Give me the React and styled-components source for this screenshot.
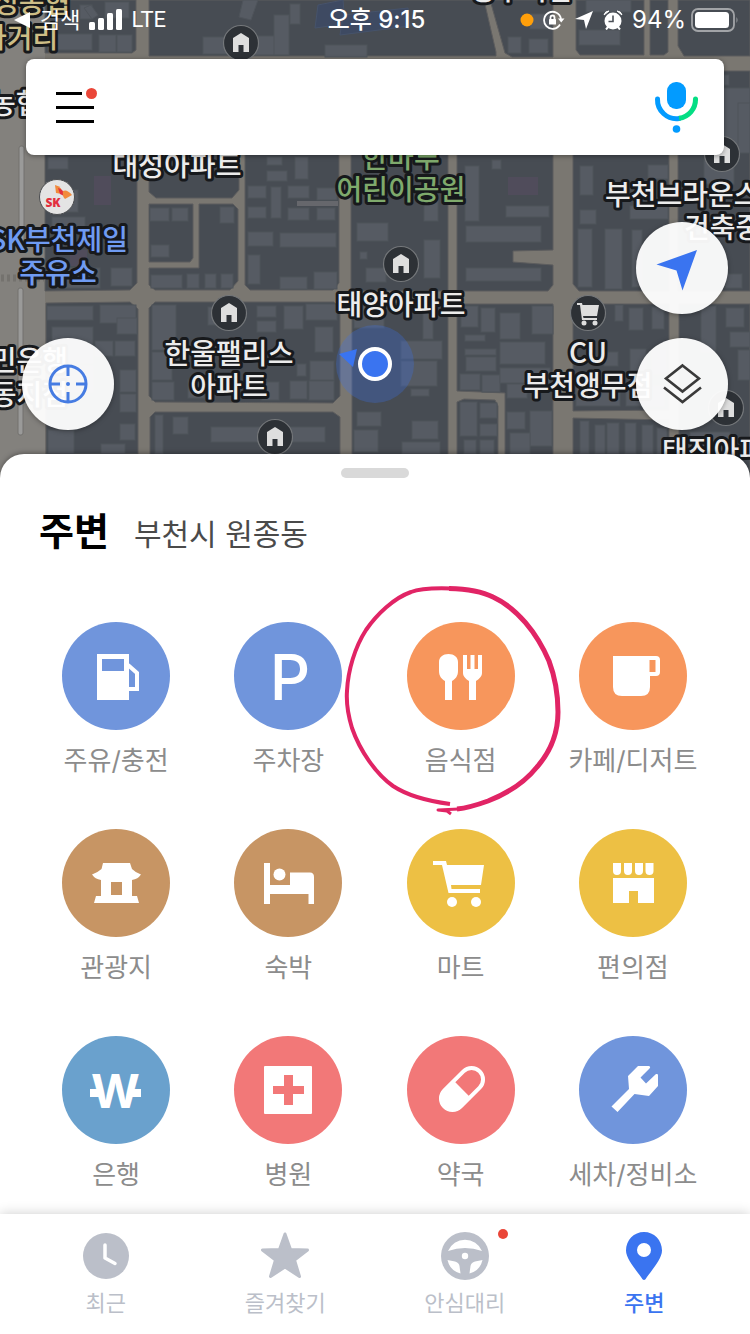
import React from "react";
import styled, { createGlobalStyle } from "styled-components";

const GlobalStyle = createGlobalStyle`
  *, *::before, *::after { box-sizing: border-box; }
  body {
    margin: 0;
    background: #fff;
    font-family: Inter, "Noto Sans CJK KR", sans-serif;
  }
  button { border: 0; padding: 0; background: none; font: inherit; cursor: pointer; }
  a { color: inherit; text-decoration: none; }
  svg { display: block; flex: none; }
`;

const Screen = styled.div`
  display: flex;
  flex-direction: column;
  min-height: 100vh;
  overflow-x: hidden;
`;

/* ---------- map ---------- */

const MapArea = styled.section`
  position: relative;
  padding-bottom: 48px;
  overflow: hidden;
  background: #7a7771;
`;

const MapCanvas = styled.svg`
  position: absolute;
  inset: 0;
  width: 100%;
  height: 100%;
`;

const MapText = styled.text`
  font-family: "Noto Sans CJK KR", sans-serif;
  font-size: 28px;
  font-weight: 500;
  fill: ${(p) => p.$color || "#ececec"};
  stroke: #17191c;
  stroke-width: 6px;
  stroke-linejoin: round;
  paint-order: stroke;
  text-anchor: ${(p) => p.$anchor || "middle"};
`;

const blocks = [
  "45,0 136,0 136,50 132,53 45,53",
  "149,0 484,0 496,52 496,56 149,56",
  "490,0 553,0 553,57 512,57 505,53",
  "576,0 644,0 644,55 580,55 576,50",
  "650,0 668,0 668,52 664,55 650,55",
  "678,0 750,0 750,56 684,56 678,46",
  "678,71 750,71 750,291 678,291",
  "45,70 137,70 137,283 130,290 45,291",
  "149,70 239,70 239,190 232,198 156,198 149,192",
  "149,204 193,204 193,258 190,262 149,262",
  "199,204 233,204 238,209 238,281 230,290 155,290 149,285 149,268 199,268",
  "245,70 339,70 339,283 333,290 250,290 245,285",
  "351,70 448,70 448,291 351,291",
  "457,70 553,70 553,250 513,251 513,262 553,265 553,285 548,291 457,291",
  "573,70 669,70 669,291 579,291 573,284",
  "46,303 130,302 138,309 138,454 46,454",
  "155,302 334,302 340,309 340,396 333,403 155,402 149,396 149,308",
  "155,412 333,412 340,417 340,480 150,480 150,417",
  "352,303 448,303 448,480 352,480",
  "457,304 553,304 553,480 505,480 505,393 457,391",
  "457,402 464,399 495,400 498,406 498,480 457,480",
  "573,304 669,304 669,410 573,411",
  "573,418 669,420 669,480 573,480",
  "679,304 750,304 750,480 679,480",
];

// x, y, width, height
const buildings = [
  [48, 34, 44, 16], [99, 35, 17, 17], [117, 35, 15, 17], [80, 5, 12, 14], [105, 2, 24, 16],
  [203, 37, 40, 17], [243, 36, 43, 19], [274, 15, 15, 40], [325, 45, 42, 12], [290, 4, 10, 20],
  [508, 37, 13, 16], [529, 39, 19, 14], [530, 14, 20, 15], [579, 30, 41, 15], [586, 0, 45, 12],
  [724, 75, 5, 10], [700, 88, 50, 60], [738, 103, 12, 50],
  [48, 157, 20, 12], [60, 190, 18, 22], [52, 217, 33, 15], [111, 268, 21, 18], [60, 268, 40, 20],
  [150, 208, 19, 13], [172, 208, 16, 13], [220, 207, 14, 16], [151, 245, 18, 12], [151, 275, 31, 13],
  [187, 274, 12, 14], [205, 274, 11, 14], [221, 274, 12, 14], [267, 157, 15, 8], [267, 171, 20, 10],
  [295, 157, 13, 22], [248, 186, 18, 12], [271, 187, 10, 31], [288, 186, 21, 12], [317, 188, 20, 12],
  [248, 207, 18, 11], [288, 208, 21, 12], [317, 208, 18, 12], [248, 232, 25, 14], [280, 233, 56, 14],
  [248, 255, 12, 29], [280, 277, 27, 12], [314, 272, 23, 17], [357, 223, 31, 18], [360, 252, 7, 7],
  [424, 240, 16, 38], [366, 268, 20, 14], [465, 166, 14, 55], [492, 160, 9, 9], [424, 197, 14, 24],
  [506, 206, 43, 11], [466, 226, 75, 16], [466, 268, 75, 13], [580, 166, 13, 29], [580, 210, 16, 14],
  [578, 229, 14, 58], [605, 229, 17, 60], [632, 230, 10, 57], [648, 165, 20, 14], [630, 206, 38, 13],
  [725, 274, 17, 14], [704, 160, 30, 24], [47, 306, 46, 14], [100, 305, 36, 18], [117, 318, 20, 16],
  [52, 327, 41, 36], [95, 341, 18, 15], [115, 341, 20, 15], [47, 366, 46, 26], [120, 370, 16, 22],
  [120, 394, 16, 18], [120, 424, 15, 16], [48, 430, 26, 24], [101, 444, 24, 10], [152, 305, 24, 45],
  [152, 352, 20, 28], [152, 382, 22, 18], [208, 307, 14, 18], [257, 306, 19, 11], [257, 321, 19, 11],
  [284, 306, 19, 23], [306, 304, 31, 16], [315, 327, 18, 25], [297, 364, 9, 12], [310, 361, 24, 19],
  [290, 381, 17, 18], [309, 381, 25, 19], [262, 382, 17, 18], [188, 380, 16, 18], [155, 415, 8, 39],
  [173, 417, 15, 17], [211, 427, 114, 15], [220, 342, 17, 18], [354, 306, 30, 22], [423, 307, 10, 32],
  [401, 341, 41, 18], [401, 361, 36, 25], [411, 389, 18, 7], [412, 421, 26, 18], [402, 442, 38, 12],
  [354, 430, 24, 22], [357, 412, 24, 14], [461, 306, 17, 21], [481, 308, 14, 24], [500, 313, 20, 26],
  [532, 306, 21, 28], [465, 335, 20, 6], [465, 349, 31, 6], [466, 357, 30, 14], [500, 342, 45, 22],
  [460, 374, 20, 16], [482, 375, 18, 17], [500, 368, 50, 15], [507, 384, 20, 14], [460, 402, 17, 34],
  [480, 403, 17, 15], [480, 424, 17, 12], [464, 440, 12, 14], [480, 440, 14, 14], [507, 412, 18, 17],
  [530, 411, 22, 35], [510, 433, 20, 21], [629, 308, 14, 22], [652, 307, 12, 22], [615, 305, 8, 16],
  [604, 352, 14, 14], [630, 349, 16, 25], [652, 350, 14, 24], [576, 388, 44, 18], [626, 386, 38, 20],
  [580, 421, 9, 33], [595, 425, 10, 29], [607, 423, 12, 31], [625, 423, 11, 31], [642, 425, 11, 29],
  [657, 428, 10, 26], [701, 306, 15, 46], [726, 308, 18, 19], [730, 332, 20, 15], [690, 432, 40, 20],
  [738, 350, 12, 30],
];

const HomePin = ({ x, y }) => (
  <g transform={`translate(${x} ${y})`}>
    <circle r="17.5" fill="#2d3136" stroke="#74777a" strokeWidth="1.2" />
    <path d="M0 -10L8 -5V9H2.5V2H-2.5V9H-8V-5Z" fill="#dedede" />
  </g>
);

const MapDrawing = () => (
  <MapCanvas viewBox="0 0 750 478" preserveAspectRatio="xMidYMin slice" role="img" aria-label="지도">
    <rect width="750" height="478" fill="#7a7771" />
    <rect width="45" height="478" fill="#83817d" />
    <g fill="#474c53" stroke="#5d5d5e" strokeWidth="1">
      {blocks.map((b) => <polygon key={b} points={b} />)}
    </g>
    <g fill="#565b63" stroke="#4f545b" strokeWidth="1">
      {buildings.map(([x, y, w, h]) => (
        <rect key={`${x}-${y}`} x={x} y={y} width={w} height={h} />
      ))}
      <polygon points="243,0 258,0 251,20 239,17" />
      <polygon points="84,8 91,5 98,15 92,19" />
    </g>
    <g fill="#3e4a62" stroke="#46536b">
      <polygon points="318,5 343,0 345,24 315,28" />
      <polygon points="343,15 408,8 410,26 340,35" />
    </g>
    <g fill="#504c5b">
      <rect x="94" y="176" width="17" height="29" />
      <rect x="508" y="177" width="30" height="18" />
      <rect x="70" y="250" width="17" height="16" />
    </g>
    <rect x="297" y="201" width="41" height="5" fill="#66676c" />
    <g fill="#9a9a99" stroke="#73716e">
      <rect x="19" y="146" width="5" height="104" rx="2" />
      <rect x="18" y="288" width="5" height="147" rx="2" />
    </g>
    <path d="M1 278H45" stroke="#74726e" strokeWidth="7" strokeDasharray="3 3" />

    <HomePin x={241} y={43} />
    <HomePin x={722} y={154} />
    <HomePin x={401} y={264} />
    <HomePin x={229} y={313} />
    <HomePin x={275} y={437} />
    <HomePin x={726} y={408} />
    <g transform="translate(588 313)">
      <circle r="17.5" fill="#2d3136" stroke="#74777a" strokeWidth="1.2" />
      <path d="M-11 -10H-6L-5.500 -8H11L9 3H-5L-4.500 5H9V7H-6L-8 -8H-11Z" fill="#dedede" />
      <circle cx="-4" cy="10" r="2.500" fill="#dedede" />
      <circle cx="7" cy="10" r="2.500" fill="#dedede" />
    </g>
    <g transform="translate(57 197)">
      <circle r="17.5" fill="#e4e4e4" stroke="#4b4d50" />
      <path d="M-2 -12Q6 -10 5 -3L-1 -4Z" fill="#f18a3c" />
      <path d="M1 -9Q7 -8 7 -1L3 -3Z" fill="#e2303f" />
      <path d="M6 -6Q10 -8 15 -2L8 2Q5 -1 6 -6Z" fill="#f18a3c" />
      <text x="-4" y="10" textAnchor="middle" fontFamily="Open Sans, sans-serif" fontWeight="800" fontSize="12" fill="#e2303f">SK</text>
    </g>

    <circle cx="375" cy="364" r="39" fill="#3a74f0" opacity="0.28" />
    <path d="M339 354L357 349L353 367Z" fill="#3a74f0" />
    <circle cx="375" cy="364" r="15" fill="#3a74f0" stroke="#fff" strokeWidth="4" />

    <MapText x="-7" y="13" $anchor="start" $color="#cdbd86">성농협</MapText>
    <MapText x="-19" y="48" $anchor="start" $color="#cdbd86">사거리</MapText>
    <MapText x="-10" y="114" $anchor="start">농협</MapText>
    <MapText x="521" y="0">성우서점</MapText>
    <MapText x="177" y="176">대성아파트</MapText>
    <MapText x="401" y="168" $color="#7faa6c">한마루</MapText>
    <MapText x="401" y="200" $color="#7faa6c">어린이공원</MapText>
    <MapText x="605" y="205" $anchor="start">부천브라운스</MapText>
    <MapText x="684" y="238" $anchor="start">건축중</MapText>
    <MapText x="128" y="250" $anchor="end" $color="#6f9bf2">SK부천제일</MapText>
    <MapText x="58" y="283" $color="#6f9bf2">주유소</MapText>
    <MapText x="401" y="315">태양아파트</MapText>
    <MapText x="229" y="364">한울팰리스</MapText>
    <MapText x="229" y="397">아파트</MapText>
    <MapText x="588" y="363">CU</MapText>
    <MapText x="588" y="396">부천앵무점</MapText>
    <MapText x="68" y="371" $anchor="end">국민은행</MapText>
    <MapText x="68" y="405" $anchor="end">동지점</MapText>
    <MapText x="662" y="461" $anchor="start">태진아파트</MapText>
  </MapCanvas>
);

/* ---------- status bar ---------- */

const StatusBar = styled.header`
  position: relative;
  display: grid;
  grid-template-columns: 1fr auto 1fr;
  align-items: center;
  height: 40px;
  padding: 0 11px 0 14px;
  color: #fff;
`;

const StatusGroup = styled.div`
  display: flex;
  align-items: center;
  justify-content: ${(p) => (p.$end ? "flex-end" : "flex-start")};
  gap: 9px;
`;

const StatusText = styled.span`
  font-size: ${(p) => (p.$small ? 22 : 24)}px;
  line-height: 32px;
  font-weight: ${(p) => (p.$strong ? 500 : 400)};
  font-family: ${(p) => (p.$narrow ? "Roboto, sans-serif" : "inherit")};
  white-space: nowrap;
`;

const BatteryGroup = styled.div`
  display: flex;
  align-items: center;
  gap: 5px;
`;

/* ---------- search ---------- */

const SearchBar = styled.form`
  position: relative;
  display: flex;
  align-items: center;
  gap: 20px;
  height: 96px;
  margin: 19px 26px 0;
  padding: 0 24px 0 30px;
  border-radius: 8px;
  background: #fff;
  box-shadow: 0 1px 5px rgba(0, 0, 0, 0.4);
`;

const SearchInput = styled.input`
  flex: 1;
  min-width: 0;
  height: 64px;
  border: 0;
  outline: 0;
  background: transparent;
  font: inherit;
  font-size: 30px;
`;

/* ---------- floating map controls ---------- */

const Controls = styled.div`
  position: relative;
  display: flex;
  align-items: flex-end;
  justify-content: space-between;
  margin-top: 67px;
  padding: 0 22px;
`;

const ControlColumn = styled.div`
  display: flex;
  flex-direction: column;
  gap: 24px;
`;

const RoundButton = styled.button`
  width: 92px;
  height: 92px;
  border-radius: 50%;
  background: rgba(255, 255, 255, 0.95);
  box-shadow: 0 1px 5px rgba(0, 0, 0, 0.35);
`;

/* ---------- sheet ---------- */

const Sheet = styled.main`
  position: relative;
  flex: 1;
  margin-top: -24px;
  padding: 14px 31px 20px 30px;
  border-radius: 24px 24px 0 0;
  background: #fff;
  box-shadow: 0 -1px 5px rgba(0, 0, 0, 0.35);
`;

const Handle = styled.div`
  width: 68px;
  height: 10px;
  margin: 0 auto;
  border-radius: 5px;
  background: #d9d9d9;
`;

const Heading = styled.div`
  display: flex;
  align-items: baseline;
  gap: 25px;
  margin: 25px 0 60px;
  padding-left: 9px;
  line-height: 56px;
`;

const Title = styled.h1`
  margin: 0;
  font-size: 38px;
  font-weight: 700;
  color: #000;
`;

const Region = styled.span`
  font-size: 30px;
  color: #4a4a4a;
`;

const CategoryGrid = styled.nav`
  display: grid;
  grid-template-columns: repeat(4, 1fr);
  row-gap: 49px;
`;

const Category = styled.a`
  position: relative;
  display: flex;
  flex-direction: column;
  align-items: center;
  gap: 12px;
`;

const Disc = styled.span`
  width: 108px;
  height: 108px;
  border-radius: 50%;
  background: ${(p) => p.$color};
`;

const DiscLetter = styled.text`
  font-family: Inter, sans-serif;
  font-size: ${(p) => p.$size}px;
  font-weight: ${(p) => p.$weight};
  text-anchor: middle;
`;

const CategoryLabel = styled.span`
  font-size: 26px;
  line-height: 38px;
  color: #8c8c8c;
  white-space: nowrap;
`;

const PenCircle = styled.svg`
  position: absolute;
  z-index: 1;
  top: -37px;
  left: 50%;
  margin-left: -118px;
  pointer-events: none;
`;

/* ---------- tab bar ---------- */

const TabBar = styled.nav`
  position: relative;
  display: grid;
  grid-template-columns: repeat(4, 1fr);
  padding: 18px 16px 16px;
  background: #fff;
  box-shadow: 0 0 12px rgba(0, 0, 0, 0.2);
`;

const Tab = styled.a`
  display: flex;
  flex-direction: column;
  align-items: center;
  gap: 8px;
  font-size: 22px;
  line-height: 30px;
  font-weight: ${(p) => (p.$active ? 500 : 400)};
  color: ${(p) => (p.$active ? "#3a74f0" : "#bbbfc9")};
`;

const TabIcon = styled.span`
  position: relative;
`;

const Badge = styled.span`
  position: absolute;
  top: -3px;
  right: -19px;
  width: 10px;
  height: 10px;
  border-radius: 50%;
  background: #ea4638;
`;

const icons = {
  fuel: (
    <>
      <path fillRule="evenodd" d="M35 32H67V78H35ZM40 37V49H62V37Z" />
      <path d="M66 43L75 51V67H66" fill="none" stroke="#fff" strokeWidth="4" />
    </>
  ),
  parking: <DiscLetter x="56" y="78" $size={63} $weight={500}>P</DiscLetter>,
  food: (
    <>
      <path d="M41.500 32C47 32 51 35 51 40V49C51 54 48.500 57 45 59V78H38V59C34.500 57 32 54 32 49V40C32 35 36 32 41.500 32Z" />
      <path d="M56 33H60V47H63.500V33H67.500V47H71V33H75V51C75 54.500 72 57 69 59V78H62V59C59 57 56 54.500 56 51Z" />
    </>
  ),
  cafe: (
    <path fillRule="evenodd" d="M34 34H77Q81 34 81 38V50Q81 54 77 54H71V65Q71 74 62 74H43Q34 74 34 65ZM70.500 38V50H76.500V38Z" />
  ),
  sight: (
    <path fillRule="evenodd" d="M41 34H68L70 40Q74 44 79 45.500Q76 50 70 51V67H75L77 74H32L34 67H39V51Q33 50 30 45.500Q35 44 39.500 40ZM49 53V66H60V53Z" />
  ),
  hotel: (
    <>
      <path d="M30 34H36V56H56V43.500H76Q80 43.500 80 48V75H74.500V65H36V75H30Z" />
      <circle cx="45.500" cy="45.500" r="6" />
    </>
  ),
  mart: (
    <>
      <path d="M26 32H39L40 36H77L74 56H44L44.500 60H73V64H41.500L35 36H26Z" />
      <circle cx="45" cy="73" r="5" />
      <circle cx="69" cy="73" r="5" />
    </>
  ),
  store: (
    <>
      <path d="M34 34H42V42Q42 46 38 46T34 42ZM45 34H53V42Q53 46 49 46T45 42ZM56 34H64V42Q64 46 60 46T56 42ZM66.500 34H74.500V42Q74.500 46 70.500 46T66.500 42Z" />
      <path d="M34 49H75V74H59V62H50V74H34Z" />
    </>
  ),
  bank: (
    <>
      <DiscLetter x="53.500" y="72" $size={47} $weight={700}>W</DiscLetter>
      <path d="M28 53H37V61H28ZM70 53H79V61H70Z" />
    </>
  ),
  hospital: (
    <path fillRule="evenodd" d="M31 30H77Q78 30 78 31V77Q78 78 77 78H31Q30 78 30 77V31Q30 30 31 30ZM50 39V50H39V58H50V69H59V58H70V50H59V39Z" />
  ),
  pharmacy: (
    <g transform="translate(55 53) rotate(-45)">
      <rect x="-25" y="-11.500" width="50" height="23" rx="11.500" fill="none" stroke="#fff" strokeWidth="4" />
      <path d="M0 -13H-13A13 13 0 0 0 -13 13H0Z" />
    </g>
  ),
  repair: (
    <path d="M59 30H70Q72 31 70.500 32.500L61.500 41.500L67 47.500L77 38Q79 37.500 79 39V50L70 60L55.500 58L38.500 76L32.500 70.500L50 53L49 40Z" />
  ),
};

const categories = [
  ["주유/충전", "fuel", "#7095dc"],
  ["주차장", "parking", "#7095dc"],
  ["음식점", "food", "#f7965c", true],
  ["카페/디저트", "cafe", "#f7965c"],
  ["관광지", "sight", "#c79564"],
  ["숙박", "hotel", "#c79564"],
  ["마트", "mart", "#edc044"],
  ["편의점", "store", "#edc044"],
  ["은행", "bank", "#6aa1cd"],
  ["병원", "hospital", "#f27878"],
  ["약국", "pharmacy", "#f27878"],
  ["세차/정비소", "repair", "#7095dc"],
];

const tabs = [
  {
    label: "최근",
    icon: (
      <>
        <circle cx="24" cy="24" r="23" />
        <path d="M23 13V26L33 31.500" fill="none" stroke="#fff" strokeWidth="3.500" strokeLinecap="round" strokeLinejoin="round" />
      </>
    ),
  },
  {
    label: "즐겨찾기",
    icon: (
      <path d="M24 2L29.500 17.500L46.500 18L33.500 28L38.500 44.500L24 35L9.500 44.500L14.500 28L1.500 18L18.500 17.500Z" stroke="currentColor" strokeWidth="3" strokeLinejoin="round" />
    ),
  },
  {
    label: "안심대리",
    badge: true,
    icon: (
      <>
        <circle cx="24" cy="24" r="24" />
        <g fill="#fff">
          <path d="M7 19A18.500 18.500 0 0 1 41 19Q24 13 7 19Z" />
          <path d="M6.500 28L14 29.500Q18 30.500 18.500 34L19.500 41.500A18 18 0 0 1 6.500 28Z" />
          <path d="M41.500 28L34 29.500Q30 30.500 29.500 34L28.500 41.500A18 18 0 0 0 41.500 28Z" />
          <circle cx="24" cy="24" r="3.200" />
        </g>
      </>
    ),
  },
  {
    label: "주변",
    active: true,
    icon: (
      <path fillRule="evenodd" d="M24 0C14 0 6 8 6 18.500C6 27 17 39 22.500 47.200Q24 48.800 25.500 47.200C31 39 42 27 42 18.500C42 8 34 0 24 0ZM24 11A7 7 0 1 1 24 25A7 7 0 1 1 24 11Z" />
    ),
  },
];

export default function App() {
  return (
    <>
      <GlobalStyle />
      <Screen>
        <MapArea>
          <MapDrawing />
          <StatusBar>
            <StatusGroup>
              <svg width="17" height="18" viewBox="0 0 17 18" fill="#fff"><path d="M0 9L16 1V17Z" /></svg>
              <StatusText $small>검색</StatusText>
              <svg width="33" height="22" viewBox="0 0 33 22" fill="#fff">
                <rect x="0" y="13" width="6" height="8" rx="1.500" />
                <rect x="9" y="9" width="6" height="12" rx="1.500" />
                <rect x="18" y="4" width="6" height="17" rx="1.500" />
                <rect x="27" y="0" width="6" height="21" rx="1.500" />
              </svg>
              <StatusText $small $narrow>LTE</StatusText>
            </StatusGroup>
            <StatusText $strong>오후 9:15</StatusText>
            <StatusGroup $end>
              <svg width="14" height="14" viewBox="0 0 14 14"><circle cx="7" cy="7" r="6.500" fill="#ff9f0a" /></svg>
              <svg width="22" height="20" viewBox="0 0 22 20" fill="none" stroke="#fff" strokeWidth="1.800">
                <path d="M17 14.500A8.500 8.500 0 1 1 18 9" />
                <path d="M15 8.500H21.500L18.200 12.500Z" fill="#fff" stroke="none" />
                <rect x="6" y="9" width="7" height="5.500" rx="0.500" fill="#fff" stroke="none" />
                <path d="M7.500 9V7.500Q7.500 5.500 9.500 5.500T11.500 7.500V9" />
              </svg>
              <svg width="20" height="20" viewBox="0 0 20 20" fill="#fff"><path d="M19 1L12 19L10 10L1 9Z" /></svg>
              <svg width="20" height="20" viewBox="0 0 20 20" fill="#fff">
                <circle cx="10" cy="11" r="8.500" />
                <path d="M1 5Q2 1 6 1ZM19 5Q18 1 14 1Z" stroke="#fff" />
                <path d="M3 19.500L6 16M17 19.500L14 16" stroke="#fff" strokeWidth="2" />
                <path d="M10 5.500V11.500H5.500" fill="none" stroke="#4b5057" strokeWidth="1.600" />
              </svg>
              <BatteryGroup>
                <StatusText>94%</StatusText>
                <svg width="48" height="24" viewBox="0 0 48 24">
                  <rect x="1" y="1" width="42" height="22" rx="6" fill="none" stroke="#a2a4a7" strokeWidth="1.800" />
                  <rect x="4" y="4" width="34" height="16" rx="3.500" fill="#fff" />
                  <path d="M45.500 9Q47.500 12 45.500 15Z" fill="#a2a4a7" />
                </svg>
              </BatteryGroup>
            </StatusGroup>
          </StatusBar>

          <SearchBar role="search">
            <button type="button" aria-label="메뉴">
              <svg width="42" height="38" viewBox="0 3 42 38">
                <path d="M0 8.500H26M0 22.500H38M0 36.500H38" stroke="#000" strokeWidth="3" />
                <circle cx="35.500" cy="8.500" r="5.500" fill="#ea4638" />
              </svg>
            </button>
            <SearchInput type="text" aria-label="장소 검색" />
            <button type="button" aria-label="음성 검색">
              <svg width="46" height="52" viewBox="0 0 46 52">
                <rect x="13" y="1" width="19" height="27" rx="9" fill="#029bff" />
                <path d="M3.500 18A19 19 0 0 0 25 37.500" fill="none" stroke="#029bff" strokeWidth="5" strokeLinecap="round" />
                <path d="M25 37.300A19 19 0 0 0 41.500 18" fill="none" stroke="#04de84" strokeWidth="5" />
                <circle cx="41.500" cy="18" r="2.500" fill="#04de84" />
                <circle cx="22.500" cy="48" r="3.800" fill="#029bff" />
              </svg>
            </button>
          </SearchBar>

          <Controls>
            <RoundButton type="button" aria-label="현재 위치">
              <svg width="92" height="92" viewBox="0 0 92 92" fill="none" stroke="#467ce2" strokeWidth="3">
                <circle cx="46" cy="46" r="18" />
                <path d="M46 28V38M46 54V64M28 46H38M54 46H64" />
                <circle cx="46" cy="46" r="2" fill="#467ce2" stroke="none" />
              </svg>
            </RoundButton>
            <ControlColumn>
              <RoundButton type="button" aria-label="내비게이션">
                <svg width="92" height="92" viewBox="0 0 92 92"><path d="M61 28L20.500 42.500L40.500 48.500L46.500 68.500Z" fill="#3a74f0" /></svg>
              </RoundButton>
              <RoundButton type="button" aria-label="지도 레이어">
                <svg width="92" height="92" viewBox="0 0 92 92" fill="none" stroke="#3a3a3a" strokeWidth="2.600">
                  <path d="M46.500 27.500L63 40.500L46.500 53.500L30 40.500Z" />
                  <path d="M28 49.500L46.500 64L65 49.500" />
                </svg>
              </RoundButton>
            </ControlColumn>
          </Controls>
        </MapArea>

        <Sheet>
          <Handle />
          <Heading>
            <Title>주변</Title>
            <Region>부천시 원종동</Region>
          </Heading>
          <CategoryGrid aria-label="주변 카테고리">
            {categories.map(([label, icon, color, circled]) => (
              <Category key={label} href="#">
                <Disc $color={color}>
                  <svg width="108" height="108" viewBox="0 0 108 108" fill="#fff" aria-hidden="true">
                    {icons[icon]}
                  </svg>
                </Disc>
                <CategoryLabel>{label}</CategoryLabel>
                {circled && (
                  <PenCircle width="220" height="232" viewBox="0 0 220 232" fill="none" stroke="#e12465" strokeLinejoin="round">
                    <path strokeWidth="4" d="M107 219C92 217 68 213 50 201C33 189 17 166 9 143C5 130 3 120 4 106C5 85 12 62 23 45C34 29 51 13 68 7C78 3 92 3 108 3.500" />
                    <path strokeWidth="5" d="M106 3.500C124 4 140 7 150 12C174 23 194 48 206 76C212 92 215 108 215 127C215 146 208 166 194 182C182 197 163 209 145 216C134 220 124 223 114 224" />
                    <path strokeWidth="3" d="M116 224L95 225L104 226L108 229" />
                  </PenCircle>
                )}
              </Category>
            ))}
          </CategoryGrid>
        </Sheet>

        <TabBar aria-label="하단 메뉴">
          {tabs.map((t) => (
            <Tab key={t.label} href="#" $active={t.active} aria-current={t.active ? "page" : undefined}>
              <TabIcon>
                <svg width="48" height="48" viewBox="0 0 48 48" fill="currentColor" aria-hidden="true">
                  {t.icon}
                </svg>
                {t.badge && <Badge />}
              </TabIcon>
              <span>{t.label}</span>
            </Tab>
          ))}
        </TabBar>
      </Screen>
    </>
  );
}
